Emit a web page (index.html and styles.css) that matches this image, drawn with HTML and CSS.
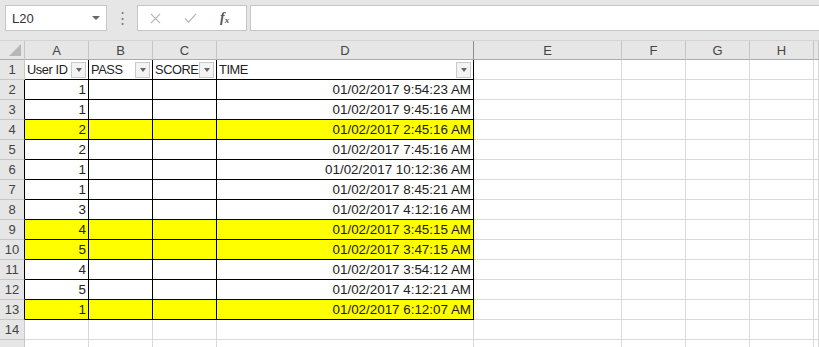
FILE: index.html
```html
<!DOCTYPE html>
<html lang="en">
<head>
    <meta charset="UTF-8">
    <title>Book1 - Excel</title>
    <link rel="stylesheet" href="styles.css">
</head>
<body>
    <div class="formula-bar">
        <div class="name-box">
            <span>L20</span>
            <svg class="caret" viewBox="0 0 8 4"><polygon points="0,0 8,0 4,4"></polygon></svg>
        </div>
        <div class="grip">&#8942;</div>
        <div class="fx-buttons">
            <svg class="fx-icon" viewBox="0 0 12 12"><path d="M1 1 L11 11 M11 1 L1 11"></path></svg>
            <svg class="fx-icon" viewBox="0 0 14 12"><path d="M1 6 L5 10 L13 1"></path></svg>
            <span class="fx-label">f<sub>x</sub></span>
        </div>
        <div class="fx-input"></div>
    </div>

    <div class="sheet">
        <div class="row col-heads">
            <div class="corner"><span class="corner-tri"></span></div>
            <div class="ch">A</div><div class="ch">B</div><div class="ch">C</div><div class="ch ch-d">D</div>
            <div class="ch">E</div><div class="ch">F</div><div class="ch">G</div><div class="ch">H</div><div class="ch"></div>
        </div>

        <div class="row">
            <div class="rh">1</div>
            <div class="c t hd"><span class="hd-text">User ID</span><span class="filter"></span></div>
            <div class="c t hd"><span class="hd-text">PASS</span><span class="filter"></span></div>
            <div class="c t hd"><span class="hd-text">SCORE</span><span class="filter"></span></div>
            <div class="c t hd"><span class="hd-text">TIME</span><span class="filter"></span></div>
            <div class="c"></div><div class="c"></div><div class="c"></div><div class="c"></div><div class="c"></div>
        </div>
        <div class="row">
            <div class="rh in">2</div>
            <div class="c t num">1</div><div class="c t"></div><div class="c t"></div>
            <div class="c t num">01/02/2017 9:54:23 AM</div>
            <div class="c"></div><div class="c"></div><div class="c"></div><div class="c"></div><div class="c"></div>
        </div>
        <div class="row">
            <div class="rh in">3</div>
            <div class="c t num">1</div><div class="c t"></div><div class="c t"></div>
            <div class="c t num">01/02/2017 9:45:16 AM</div>
            <div class="c"></div><div class="c"></div><div class="c"></div><div class="c"></div><div class="c"></div>
        </div>
        <div class="row hl">
            <div class="rh in">4</div>
            <div class="c t num">2</div><div class="c t"></div><div class="c t"></div>
            <div class="c t num">01/02/2017 2:45:16 AM</div>
            <div class="c"></div><div class="c"></div><div class="c"></div><div class="c"></div><div class="c"></div>
        </div>
        <div class="row">
            <div class="rh in">5</div>
            <div class="c t num">2</div><div class="c t"></div><div class="c t"></div>
            <div class="c t num">01/02/2017 7:45:16 AM</div>
            <div class="c"></div><div class="c"></div><div class="c"></div><div class="c"></div><div class="c"></div>
        </div>
        <div class="row">
            <div class="rh in">6</div>
            <div class="c t num">1</div><div class="c t"></div><div class="c t"></div>
            <div class="c t num">01/02/2017 10:12:36 AM</div>
            <div class="c"></div><div class="c"></div><div class="c"></div><div class="c"></div><div class="c"></div>
        </div>
        <div class="row">
            <div class="rh in">7</div>
            <div class="c t num">1</div><div class="c t"></div><div class="c t"></div>
            <div class="c t num">01/02/2017 8:45:21 AM</div>
            <div class="c"></div><div class="c"></div><div class="c"></div><div class="c"></div><div class="c"></div>
        </div>
        <div class="row">
            <div class="rh in">8</div>
            <div class="c t num">3</div><div class="c t"></div><div class="c t"></div>
            <div class="c t num">01/02/2017 4:12:16 AM</div>
            <div class="c"></div><div class="c"></div><div class="c"></div><div class="c"></div><div class="c"></div>
        </div>
        <div class="row hl">
            <div class="rh in">9</div>
            <div class="c t num">4</div><div class="c t"></div><div class="c t"></div>
            <div class="c t num">01/02/2017 3:45:15 AM</div>
            <div class="c"></div><div class="c"></div><div class="c"></div><div class="c"></div><div class="c"></div>
        </div>
        <div class="row hl">
            <div class="rh in">10</div>
            <div class="c t num">5</div><div class="c t"></div><div class="c t"></div>
            <div class="c t num">01/02/2017 3:47:15 AM</div>
            <div class="c"></div><div class="c"></div><div class="c"></div><div class="c"></div><div class="c"></div>
        </div>
        <div class="row">
            <div class="rh in">11</div>
            <div class="c t num">4</div><div class="c t"></div><div class="c t"></div>
            <div class="c t num">01/02/2017 3:54:12 AM</div>
            <div class="c"></div><div class="c"></div><div class="c"></div><div class="c"></div><div class="c"></div>
        </div>
        <div class="row">
            <div class="rh in">12</div>
            <div class="c t num">5</div><div class="c t"></div><div class="c t"></div>
            <div class="c t num">01/02/2017 4:12:21 AM</div>
            <div class="c"></div><div class="c"></div><div class="c"></div><div class="c"></div><div class="c"></div>
        </div>
        <div class="row hl">
            <div class="rh in">13</div>
            <div class="c t num">1</div><div class="c t"></div><div class="c t"></div>
            <div class="c t num">01/02/2017 6:12:07 AM</div>
            <div class="c"></div><div class="c"></div><div class="c"></div><div class="c"></div><div class="c"></div>
        </div>
        <div class="row">
            <div class="rh">14</div>
            <div class="c"></div><div class="c"></div><div class="c"></div><div class="c"></div>
            <div class="c"></div><div class="c"></div><div class="c"></div><div class="c"></div><div class="c"></div>
        </div>
        <!-- row 15 is only a sliver at the window's edge -->
        <div class="row">
            <div class="rh"></div>
            <div class="c"></div><div class="c"></div><div class="c"></div><div class="c"></div>
            <div class="c"></div><div class="c"></div><div class="c"></div><div class="c"></div><div class="c"></div>
        </div>
    </div>
</body>
</html>
```

FILE: styles.css
```css
:root {
    --cols: 25px 64px 64px 64px 257px 148px 64px 64px 64px 1fr;
    --chrome-bg: #e6e6e6;
    --grid-line: #d9d9d9;
    --head-line: #c6c6c6;
    --text: #222;
    --font-ui: 'Liberation Sans', Arial, sans-serif;
}
* { margin: 0; padding: 0; box-sizing: border-box; }
body { font-family: var(--font-ui); background: #fff; width: 819px; height: 347px; overflow: hidden; color: var(--text); }

/* formula bar */
.formula-bar { height: 40px; background: var(--chrome-bg); display: flex; align-items: flex-start; padding: 5px 0 0 5px; }
.name-box {
    width: 102px; height: 26px; background: #fff; border: 1px solid #c6c6c6;
    display: flex; align-items: center; justify-content: space-between; padding: 0 6px 0 6px; font-size: 13px; color: #333;
}
.name-box .caret { width: 8px; height: 4px; fill: #666; }
.grip { width: 30px; height: 26px; text-align: center; line-height: 26px; color: #777; font-size: 15px; }
.fx-buttons {
    width: 110px; height: 26px; background: #fff; border: 1px solid #c6c6c6;
    display: flex; align-items: center; padding-left: 12px;
}
.fx-icon { stroke: #b3b3b3; stroke-width: 1.3; fill: none; }
.fx-icon:first-child { width: 11px; height: 11px; margin-right: 23px; }
.fx-icon:nth-child(2) { width: 13px; height: 11px; margin-right: 23px; }
.fx-label { font-family: 'Liberation Serif', serif; font-style: italic; font-size: 14px; color: #555; font-weight: bold; }
.fx-label sub { font-size: 9px; vertical-align: -1px; }
.fx-input { flex: 1; height: 26px; margin-left: 3px; background: #fff; border: 1px solid #c6c6c6; border-right: none; }

/* grid */
.sheet { font-size: 13.4px; }
.row { display: grid; grid-template-columns: var(--cols); height: 20px; }
.c {
    border-right: 1px solid var(--grid-line); border-bottom: 1px solid var(--grid-line);
    display: flex; align-items: center; padding: 0 2px; white-space: nowrap; overflow: hidden;
}
.c.t { border-right-color: #000; border-bottom-color: #000; }
.c.num { justify-content: flex-end; padding-right: 2px; }
.hl .c.t { background: #ffff00; }
.hd { padding-left: 2px; }
.hd-text { flex: none; font-size: 12.8px; letter-spacing: -0.4px; }
.filter {
    margin-left: auto; flex: none; width: 15px; height: 16px; border: 1px solid #c9c9c9; background: #f3f3f3;
    display: flex; align-items: center; justify-content: center;
}
.filter::after { content: ""; border-left: 3px solid transparent; border-right: 3px solid transparent; border-top: 4px solid #666; }

.rh {
    background: var(--chrome-bg); border-right: 1px solid var(--head-line); border-bottom: 1px solid var(--head-line);
    display: flex; align-items: center; justify-content: center; color: #444; font-size: 13px;
}
.rh.in { border-right-color: #000; }

.col-heads { background: var(--chrome-bg); border-top: 1px solid #d4d4d4; }
.ch {
    border-right: 1px solid var(--head-line); border-bottom: 1px solid #ababab;
    display: flex; align-items: center; justify-content: center; color: #444; font-size: 13px;
}
.ch-d { border-right-color: #8c8c8c; }
.corner { border-right: 1px solid var(--head-line); border-bottom: 1px solid #ababab; display: flex; align-items: flex-end; justify-content: flex-end; padding: 0 3px 3px 0; }
.corner-tri { width: 0; height: 0; border-left: 12px solid transparent; border-bottom: 12px solid #b7b7b7; }
```
